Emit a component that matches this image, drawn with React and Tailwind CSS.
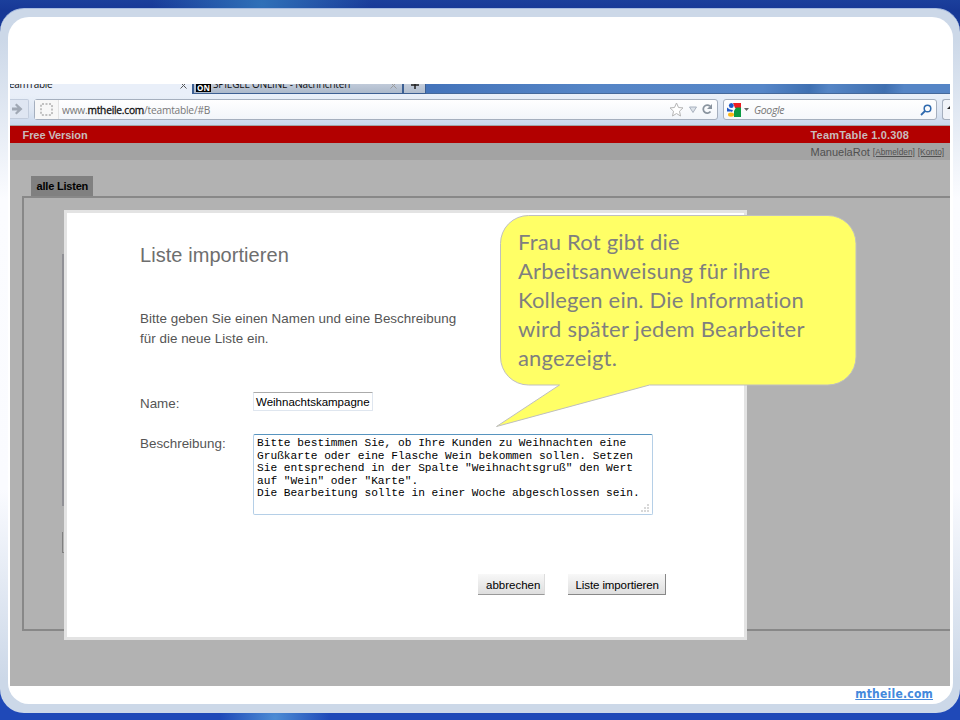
import React from "react";

function TabStrip() {
  return (
    <div className="flex h-[10px] overflow-hidden bg-[linear-gradient(100deg,#4474bb_0%,#4474bb_45%,#5585c6_62%,#5686c8_80%,#3f70b2_85%,#5585c5_87%,#3f6fb0_93%,#5585c6_95%)] font-['Open_Sans',sans-serif] text-[10px] leading-[10px] text-[#111]">
      <div className="flex w-[182px] justify-between bg-[#e9eff9]">
        <span className="-ml-[1px] -mt-[5px] tracking-[-0.3px] whitespace-nowrap">eamTable</span>
        <svg className="mr-[5px]" width="7" height="5"><path d="M0.500 4.500L3.500 1.500L6.500 4.500M2 0l1.500 1.500L5 0" fill="none" stroke="#555" /></svg>
      </div>
      <div className="flex w-[212px] border-x-2 border-b border-[#3c5f93] bg-linear-to-b from-[#c0cad9] to-[#acb9cb]">
        <span className="ml-[2px] h-[8px] w-[15px] bg-black text-center text-[8px] font-bold leading-[8px] text-white">ON</span>
        <span className="-mt-[5px] ml-[2px] w-[140px] tracking-[-0.180px] whitespace-nowrap">SPIEGEL ONLINE - Nachrichten</span>
        <svg className="ml-auto mr-[5px]" width="7" height="5"><path d="M0.500 4.500L3.500 1.500L6.500 4.500M2 0l1.500 1.500L5 0" fill="none" stroke="#999" /></svg>
      </div>
      <div className="w-[22px] border-b border-r border-[#3c5f93] bg-linear-to-b from-[#c4cddb] to-[#b2becf] text-center">
        <svg className="mx-auto" width="10" height="6"><path d="M1 1h8M5 0v5" stroke="#222" strokeWidth="1.500" /></svg>
      </div>
      <div className="flex-1 border-b border-[#45699b]" />
    </div>
  );
}

function GoogleMark() {
  return (
    <svg width="14" height="14" viewBox="0 0 14 14" className="shrink-0">
      <path d="M6 0h8v5H8z" fill="#ec1c24" />
      <path d="M9 4.500h5V14H7V8z" fill="#0a9a43" />
      <ellipse cx="4.300" cy="2.500" rx="2.400" ry="2.500" fill="#1c57c8" />
      <path d="M0 4.500l3.500 2.500v1.500H0z" fill="#1c57c8" />
      <path d="M3 6.500l3 .5-1 2-2-1z" fill="#1c57c8" />
      <ellipse cx="4" cy="11.600" rx="3" ry="2.200" fill="#fdb813" />
    </svg>
  );
}

function Toolbar() {
  return (
    <div className="flex h-[32px] items-start overflow-hidden border-b border-[#a4a4a4] bg-linear-to-b from-[#eaf0f9] via-[#dfe7f3] to-[#c9d8ec] pt-[5px] font-['Open_Sans',sans-serif] text-[10px] text-[#777]">
      <div className="flex h-[20px] w-[19px] items-center rounded-r-[2px] border-y border-r border-[#c3cddd] bg-[#dfe6f2]">
        <svg width="14" height="14" viewBox="0 0 14 14"><path d="M2 5.500h5.500L5 3l1.500-1.500L12.500 7l-6 5.500L5 11l2.500-2.500H2z" fill="#a0a8b4" /></svg>
      </div>
      <div className="ml-[5px] flex h-[21px] w-[684px] items-center rounded-[3px] border border-[#a5afbe] bg-linear-to-b from-white to-[#f2f5fa]">
        <div className="flex h-full w-[24px] items-center justify-center border-r border-[#e2e2e2] bg-[#f7f7f7]">
          <svg width="13" height="13"><rect x="1" y="1" width="11" height="11" rx="1" fill="none" stroke="#8a8a8a" strokeDasharray="2 1.5" /></svg>
        </div>
        <div className="ml-[3px] mt-[2px] whitespace-nowrap text-[10.200px] tracking-[-0.220px]">
          www.<span className="text-[#111] [-webkit-text-stroke:0.3px_#111]">mtheile.com</span>/teamtable/#B
        </div>
        <svg className="ml-auto mr-[4px]" width="44" height="15" viewBox="0 0 44 15">
          <path d="M7.500 1l2 4.500 4.500.4-3.500 3.300 1 4.800-4-2.500-4 2.500 1-4.800L1 5.900l4.500-.4z" fill="#fff" stroke="#b5b5b5" />
          <path d="M20.500 5h7L24 10.500z" fill="#dde3ea" stroke="#a9b2bf" />
          <path d="M41 4.200A4 4 0 1 0 41.500 9.500" fill="none" stroke="#8a949f" strokeWidth="1.800" />
          <path d="M43 2V7h-5z" fill="#8a949f" />
        </svg>
      </div>
      <div className="ml-[5px] flex h-[21px] w-[214px] items-center rounded-[3px] border border-[#a5afbe] bg-linear-to-b from-white to-[#f5f7fb] pl-[3px]">
        <GoogleMark />
        <svg className="ml-[3px]" width="6" height="4"><path d="M0 0h5L2.500 3z" fill="#666" /></svg>
        <span className="ml-[4px] mt-[2px] text-[10.500px] italic tracking-[-0.350px]">Google</span>
        <svg className="ml-auto mr-[4px]" width="12" height="12" viewBox="0 0 12 12"><circle cx="7.500" cy="4.500" r="3.300" fill="none" stroke="#2f6aaf" strokeWidth="1.500" /><path d="M5 7L1 11" stroke="#2f6aaf" strokeWidth="1.800" /></svg>
      </div>
      <div className="ml-[5px] flex h-[21px] flex-1 items-center rounded-l-[3px] border-y border-l border-[#a5afbe] bg-[#f0f3f8]">
        <svg className="ml-auto" width="3" height="7"><path d="M0 3L3 0v3z" fill="#222" /></svg>
      </div>
    </div>
  );
}

function ImportDialog() {
  return (
    <div className="absolute left-[54px] top-[67px] h-[430px] w-[683px] border-[3px] border-[#e3e3e3] bg-white pl-[73px] text-[13.400px] text-[#555]">
      <h1 className="mt-[30px] h-[24px] text-[20px] leading-[24px] tracking-[0.060px] text-[#6e6e6e]">Liste importieren</h1>
      <p className="mt-[42px] whitespace-nowrap leading-[19.500px] tracking-[0.025px]">
        Bitte geben Sie einen Namen und eine Beschreibung<br />für die neue Liste ein.
      </p>
      <div className="mt-[44px] flex h-[20px]">
        <label className="w-[113px] pt-[2px] leading-[20px]">Name:</label>
        <div className="h-[19px] w-[120px] rounded-[1px] border border-[#dfe6ef] border-t-[#ababab] pl-[2px] text-[11.500px] leading-[19px] whitespace-nowrap text-black">Weihnachtskampagne</div>
      </div>
      <div className="mt-[22px] flex">
        <label className="w-[113px] leading-[20px]">Beschreibung:</label>
        <div className="relative h-[81px] w-[400px] rounded-[2px] border border-[#b5cfe7] border-t-[#5794bf] pl-[3px] pt-[2px] font-['Liberation_Mono',monospace] text-[11.200px] leading-[12.600px] whitespace-pre text-black">
          {'Bitte bestimmen Sie, ob Ihre Kunden zu Weihnachten eine\nGrußkarte oder eine Flasche Wein bekommen sollen. Setzen\nSie entsprechend in der Spalte "Weihnachtsgruß" den Wert\nauf "Wein" oder "Karte".\nDie Bearbeitung sollte in einer Woche abgeschlossen sein.'}
          <svg className="absolute bottom-[2px] right-[3px]" width="8" height="8"><path d="M6 1h2M3 4h2M6 4h2M0 7h2M3 7h2M6 7h2" stroke="#ccc" strokeWidth="1.500" /></svg>
        </div>
      </div>
      <div className="mt-[59px] flex text-[11.500px] leading-[23px] text-black">
        <div className="ml-[338px] h-[21px] w-[67px] border-b border-r border-[#999] border-r-[#ddd] bg-linear-to-b from-[#f8f8f8] to-[#dedede] pl-[8px] whitespace-nowrap">abbrechen</div>
        <div className="ml-[23px] h-[21px] w-[98px] border-b border-r border-[#888] bg-linear-to-b from-[#f8f8f8] to-[#dedede] pl-[7.500px] tracking-[-0.1px] whitespace-nowrap">Liste importieren</div>
      </div>
    </div>
  );
}

function Callout() {
  return (
    <div className="absolute left-[485px] top-[71px] h-[216px] w-[364px]">
      <svg className="absolute inset-0" width="364" height="216">
        <path d="M33.500 1.500H333a28 28 0 0 1 28 28V143a28 28 0 0 1-28 28H154.500L1.500 212.500 64.500 171H33.500a28 28 0 0 1-28-28V29.500a28 28 0 0 1 28-28z" fill="#ffff66" stroke="#bfbfbf" />
      </svg>
      <div className="relative pl-[23px] pt-[13px] font-['Lato',sans-serif] text-[22px] leading-[29px] tracking-[0.180px] whitespace-nowrap text-[#7f7f7f]">
        <div>Frau Rot gibt die</div>
        <div>Arbeitsanweisung für ihre</div>
        <div>Kollegen ein. Die Information</div>
        <div className="tracking-[0.270px]">wird später jedem Bearbeiter</div>
        <div>angezeigt.</div>
      </div>
    </div>
  );
}

export default function App() {
  return (
    <div className="flex h-[720px] w-[960px] flex-col overflow-hidden bg-[radial-gradient(circle_at_275px_718px,#4c8cd4_0,transparent_55px),radial-gradient(ellipse_at_262px_4px,#2f70b8_0,transparent_110px),linear-gradient(#1b3f9c,#173896_10px,#1f49b8_700px)] pt-[8px] font-['Liberation_Sans',Arial,sans-serif]">
      <div className="h-[705px] rounded-[24px] border-t border-[#a9bde0] bg-[linear-gradient(#ccd8e8_0px,#ccd8e8_30px,#fbfcff_190px,#fafbff_480px,#ccd8e8_670px)] px-[7.500px] pt-[8px]">
        <div className="flex h-[687px] flex-col rounded-[21px] bg-white px-[2.500px] pt-[67px]">
          <div className="h-[602px] w-[940px] overflow-hidden bg-[#b2b2b2]">
            <TabStrip />
            <Toolbar />
            <div className="flex h-[17px] bg-[#b20000] text-[11px] font-bold leading-[18px] text-[#c9bcbc]">
              <span className="ml-[12.500px] w-[788px] tracking-[-0.080px]">Free Version</span>
              <span className="tracking-[0.180px] whitespace-nowrap">TeamTable 1.0.308</span>
            </div>
            <div className="relative h-[543px]">
              <div className="flex h-[17px] items-center bg-[#a3a3a3] pl-[800.500px] pt-[1px] text-[11px] whitespace-nowrap text-[#505050]">
                <span>ManuelaRot</span>
                <span className="ml-[3px] text-[8.300px] underline">[Abmelden]</span>
                <span className="ml-[3px] text-[8.300px] underline">[Konto]</span>
              </div>
              <div className="ml-[21px] mt-[16px] h-[20px] w-[62px] bg-[#808080] pl-[5.500px] text-[11px] font-bold leading-[21px] tracking-[-0.200px] text-black">alle Listen</div>
              <div className="ml-[12px] h-[435px] border-2 border-r-0 border-[#888] pl-[38px] pt-[56px]">
                <div className="h-[252px] w-[400px] border-2 border-r-0 border-[#909095]" />
                <div className="mt-[26px] h-[21px] w-[4px] border-b border-l border-[#808080]" />
              </div>
              <ImportDialog />
              <Callout />
            </div>
          </div>
          <a className="mr-[17px] self-end font-['DejaVu_Sans_Condensed','DejaVu_Sans',sans-serif] text-[12px] font-bold leading-[16px] tracking-[0.220px] text-[#4389dc] underline">mtheile.com</a>
        </div>
      </div>
    </div>
  );
}
